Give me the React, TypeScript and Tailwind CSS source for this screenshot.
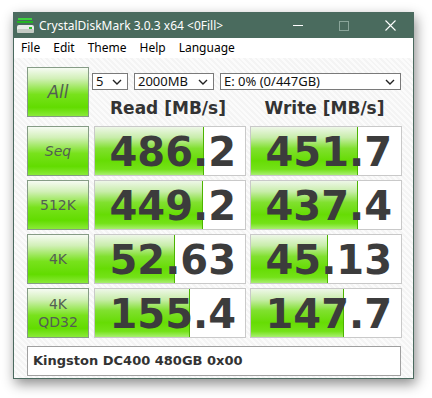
import React from "react";

const ui = { fontFamily: '"Noto Sans", "Open Sans", sans-serif' };
const btn = { fontFamily: '"DejaVu Sans", Tahoma, sans-serif' };
const bold = { fontFamily: '"DejaVu Sans", Verdana, sans-serif' };

type Row = { label: string[]; italic?: boolean; read: string; write: string; rFill: number; wFill: number };

const rows: Row[] = [
  { label: ["Seq"], italic: true, read: "486.2", write: "451.7", rFill: 109, wFill: 107 },
  { label: ["512K"], read: "449.2", write: "437.4", rFill: 108, wFill: 107 },
  { label: ["4K"], read: "52.63", write: "45.13", rFill: 80, wFill: 77 },
  { label: ["4K", "QD32"], read: "155.4", write: "147.7", rFill: 95, wFill: 93 },
];

function GreenButton({ lines, italic, big }: { lines: string[]; italic?: boolean; big?: boolean }) {
  return (
    <div
      className={`h-[50px] border border-[#869c86] bg-[linear-gradient(to_bottom,#f6fbf3_0%,#d2f0b8_22%,#78e21c_55%,#62dc00_82%,#8aea38_100%)] flex flex-col items-center justify-center text-[#535f53] leading-[18px] ${italic ? "italic" : ""} ${big ? "text-[17px]" : "text-[14px]"}`}
      style={btn}
    >
      {lines.map((l) => (
        <span key={l}>{l}</span>
      ))}
    </div>
  );
}

function Meter({ value, fill }: { value: string; fill: number }) {
  return (
    <div className="relative h-[50px] border border-[#c9c9c9] bg-white overflow-hidden">
      <div
        className="absolute left-0 top-0 bottom-0 border-r border-[#4cb400] bg-[linear-gradient(to_bottom,#eef7e8_0%,#c8edaa_22%,#80e02e_45%,#66dc04_70%,#74e218_88%,#a8ef70_100%)]"
        style={{ width: fill }}
      />
      <div
        className="relative h-full flex items-center justify-end pr-[9px] pt-[3px] text-[40px] leading-none font-bold text-[#3c3c3c]"
        style={bold}
      >
        {value}
      </div>
    </div>
  );
}

function Chevron() {
  return (
    <svg width="10" height="6" viewBox="0 0 10 6" className="shrink-0">
      <path d="M1 1 L5 5 L9 1" fill="none" stroke="#222" strokeWidth="1.4" />
    </svg>
  );
}

function Select({ text, w }: { text: string; w: string }) {
  return (
    <div className={`${w} h-[17px] border border-[#7a7a7a] bg-white flex items-center justify-between pl-[3px] pr-[5px] text-[13px] text-[#111]`} style={ui}>
      <span className="leading-none">{text}</span>
      <Chevron />
    </div>
  );
}

export default function App() {
  return (
    <div className="w-[432px] h-[398px] bg-white pt-[12px] pl-[13px] overflow-hidden">
      <div className="w-[401px] h-[367px] border border-[#4b6a5f] shadow-[2px_5px_12px_rgba(0,0,0,0.45)] flex flex-col">
        {/* title bar */}
        <div className="h-[25px] bg-[#4a6b5e] flex items-center text-white text-[12px]" style={ui}>
          <svg width="17" height="16" viewBox="0 0 17 16" className="ml-[3px] mr-[5px]">
            <rect x="1" y="0" width="14" height="2" fill="#3fd13f" />
            <rect x="0" y="3" width="16" height="2" fill="#22b422" />
            <rect x="0" y="7" width="17" height="8" rx="2" fill="#e8ece8" />
            <rect x="0" y="11" width="17" height="4" rx="1.5" fill="#c4cbc4" />
            <rect x="12" y="9" width="3" height="2" fill="#2ec02e" />
          </svg>
          <span className="leading-none">CrystalDiskMark 3.0.3 x64 &lt;0Fill&gt;</span>
          <div className="ml-auto flex items-center h-full">
            <div className="w-[46px] flex justify-center">
              <div className="w-[10px] h-px bg-white" />
            </div>
            <div className="w-[46px] flex justify-center">
              <div className="w-[10px] h-[10px] border border-[#8aa59a]" />
            </div>
            <div className="w-[46px] flex justify-center">
              <svg width="11" height="11" viewBox="0 0 11 11">
                <path d="M0.5 0.5 L10.5 10.5 M10.5 0.5 L0.5 10.5" stroke="#fff" strokeWidth="1.1" />
              </svg>
            </div>
          </div>
        </div>
        {/* menu */}
        <div className="h-[20px] bg-white flex items-center gap-[13px] pl-[7px] text-[12px] text-black" style={ui}>
          <span>File</span>
          <span>Edit</span>
          <span>Theme</span>
          <span>Help</span>
          <span>Language</span>
        </div>
        {/* content */}
        <div className="flex-1 pt-[9px] pl-[13px] bg-[#f7f7f7] bg-[repeating-linear-gradient(45deg,#f4f4f4_0px,#f4f4f4_2px,#fbfbfb_2px,#fbfbfb_4px)]">
          <div className="grid grid-cols-[62px_152px_151px] gap-x-[5px] gap-y-[4px] [&>*:nth-child(3n+2)]:ml-[-1px]">
            <GreenButton lines={["All"]} italic big />
            <div className="col-span-2 flex flex-col">
              <div className="flex gap-[6px] mt-[6px] ml-[-1px]">
                <Select text="5" w="w-[36px]" />
                <Select text="2000MB" w="w-[80px]" />
                <Select text="E: 0% (0/447GB)" w="w-[181px]" />
              </div>
              <div className="flex-1 grid grid-cols-[152px_151px] gap-x-[5px] ml-[-1px] text-[17px] font-bold text-[#333]" style={bold}>
                <div className="text-center pt-[6px]">Read [MB/s]</div>
                <div className="text-center pt-[6px]">Write [MB/s]</div>
              </div>
            </div>
            {rows.map((r) => (
              <React.Fragment key={r.read}>
                <GreenButton lines={r.label} italic={r.italic} />
                <Meter value={r.read} fill={r.rFill} />
                <Meter value={r.write} fill={r.wFill} />
              </React.Fragment>
            ))}
          </div>
          <div className="mt-[8px] w-[374px] h-[30px] border border-[#a0a0a0] bg-white flex items-center pl-[5px] text-[13px] font-bold text-[#333]" style={bold}>
            Kingston DC400 480GB 0x00
          </div>
        </div>
      </div>
    </div>
  );
}
